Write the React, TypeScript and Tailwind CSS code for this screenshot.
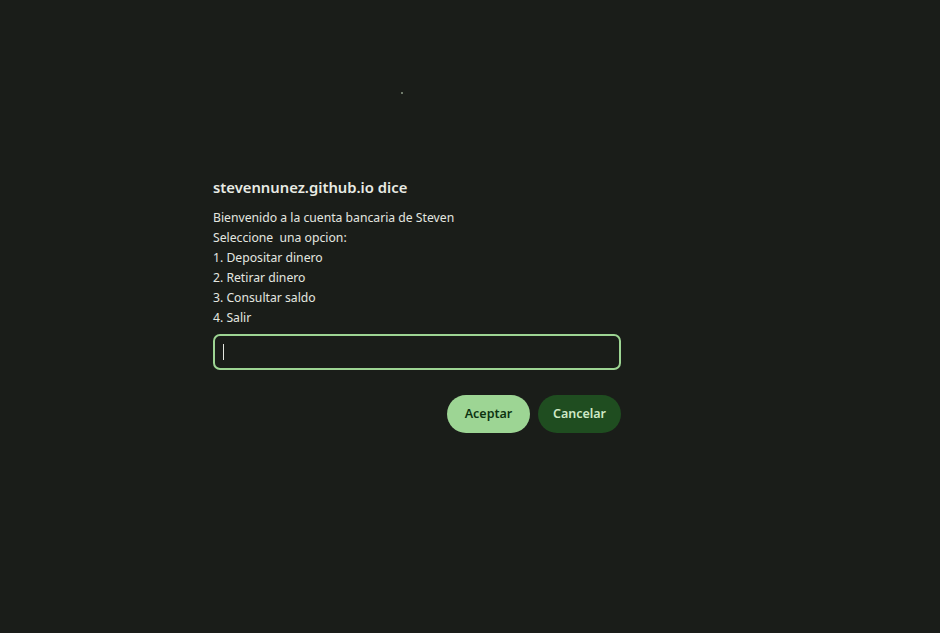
export default function App() {
  const lines = [
    "Bienvenido a la cuenta bancaria de Steven",
    "Seleccione\u00a0 una opcion:",
    "1. Depositar dinero",
    "2. Retirar dinero",
    "3. Consultar saldo",
    "4. Salir",
  ];

  return (
    <div
      className="min-h-[633px] w-full bg-[#1a1d19] text-[#e4e7e0]"
      style={{ fontFamily: '"Noto Sans", "Open Sans", sans-serif' }}
    >
      <div className="flex h-[177px] flex-col">
        <div className="ml-[401px] mt-[92px] h-[2px] w-[2px] bg-[#6f7a6a]" />
      </div>
      <div className="ml-[213px] flex w-[408px] flex-col">
        <h1 className="text-[14.8px] font-semibold leading-[20px] text-[#e8ebe4]">
          stevennunez.github.io dice
        </h1>
        <div className="mt-[11px] flex flex-col text-[12.2px] leading-[20px]">
          {lines.map((l) => (
            <p key={l}>{l}</p>
          ))}
        </div>
        <div className="mt-[6px] flex h-[36px] items-center rounded-[7px] border-2 border-[#9dd593] px-[8px]">
          <div className="h-[16px] w-px bg-[#e4e7e0]" />
        </div>
        <div className="mt-[25px] flex justify-end gap-2">
          <button className="h-[38px] w-[83px] rounded-full bg-[#9dd594] text-[12.5px] font-semibold text-[#0d3411]">
            Aceptar
          </button>
          <button className="h-[38px] w-[83px] rounded-full bg-[#1f4d20] text-[12.5px] font-semibold text-[#cfe9c6]">
            Cancelar
          </button>
        </div>
      </div>
    </div>
  );
}
